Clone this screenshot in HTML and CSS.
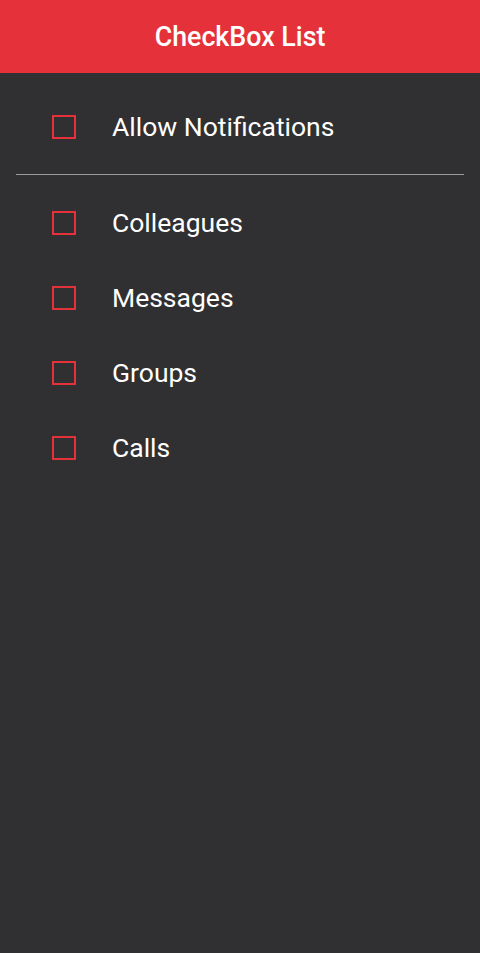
FILE: index.html
```html
<!DOCTYPE html>
<html>
<head>
<meta charset="utf-8">
<link rel="stylesheet" href="styles.css">
</head>
<body>
<header class="appbar"><h1 class="title">CheckBox List</h1></header>
<main class="content">
  <ul class="list list-top">
    <li class="row"><span class="box"></span><span class="label">Allow Notifications</span></li>
  </ul>
  <hr class="divider">
  <ul class="list list-sub">
    <li class="row"><span class="box"></span><span class="label">Colleagues</span></li>
    <li class="row"><span class="box"></span><span class="label">Messages</span></li>
    <li class="row"><span class="box"></span><span class="label">Groups</span></li>
    <li class="row"><span class="box"></span><span class="label">Calls</span></li>
  </ul>
</main>
</body>
</html>
```
FILE: styles.css
```css
html, body {
  margin: 0;
  padding: 0;
  height: 100%;
}
body {
  background: #302f31;
  font-family: Roboto, "Noto Sans", sans-serif;
  color: #ffffff;
}
.appbar {
  height: 73px;
  background: #e5323a;
  display: flex;
  align-items: center;
  justify-content: center;
}
.title {
  margin: 0;
  font-size: 26.8px;
  font-weight: 500;
  color: #ffffff;
}
.list {
  list-style: none;
  margin: 0;
  padding: 0;
}
.list-top {
  padding-top: 16px;
}
.list-sub {
  padding-top: 10px;
}
.row {
  height: 75px;
  display: flex;
  align-items: center;
  padding-left: 52px;
}
.box {
  width: 24px;
  height: 24px;
  box-sizing: border-box;
  border: 2px solid #e5323a;
  margin-right: 36px;
  flex: none;
}
.label {
  font-size: 26.5px;
  font-weight: 400;
}
.divider {
  margin: 10px 16px 0;
  border: 0;
  height: 1px;
  background: #9a999b;
}
```
